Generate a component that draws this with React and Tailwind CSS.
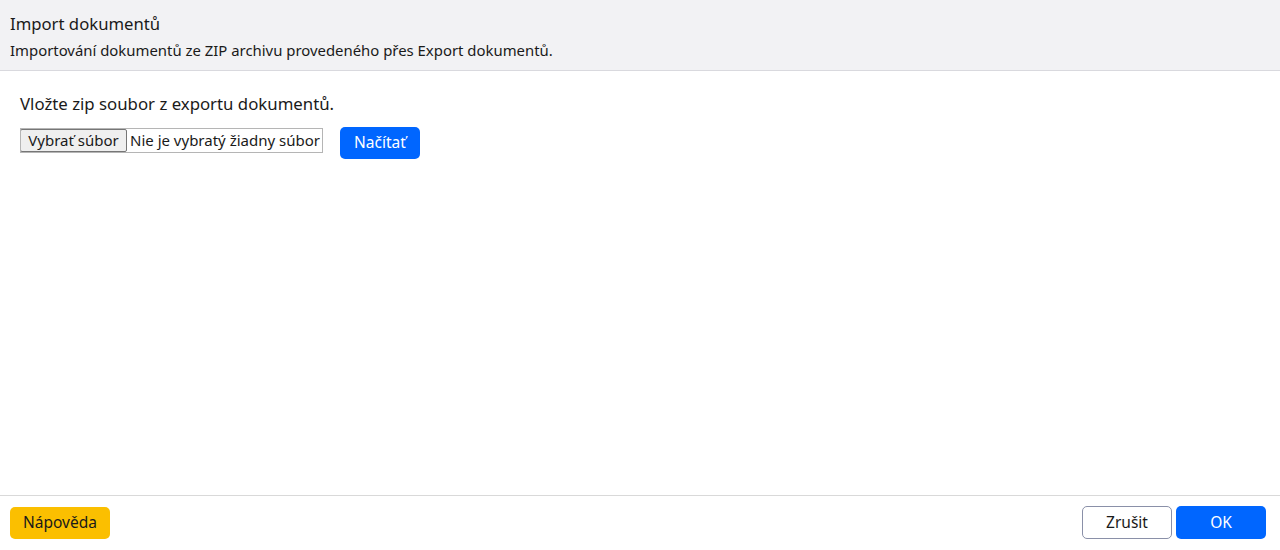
export default function App() {
  return (
    <div
      className="h-[550px] w-[1280px] flex flex-col bg-white text-[#1a1a1a]"
      style={{ fontFamily: '"Noto Sans", "Open Sans", sans-serif' }}
    >
      {/* Header */}
      <div className="h-[71px] shrink-0 bg-[#f2f2f4] border-b border-[#d9d9de] px-[10px] pt-[12px]">
        <div className="text-[16.7px] leading-[24px]">Import dokumentů</div>
        <div className="text-[14.9px] leading-[20px] mt-[4px]">
          Importování dokumentů ze ZIP archivu provedeného přes Export dokumentů.
        </div>
      </div>

      {/* Body */}
      <div className="flex-1 px-[20px] pt-[21px]">
        <p className="text-[16.8px] leading-[24px]">Vložte zip soubor z exportu dokumentů.</p>
        <div className="flex items-start mt-[11px]">
          <div className="flex items-center w-[303px] h-[25px] mt-[1px] border border-[#b5b5b5] text-[15px] overflow-hidden whitespace-nowrap">
            <span className="h-[23px] w-[107px] shrink-0 justify-center flex items-center bg-[#efefef] border border-[#767676] rounded-[2px] -ml-px">
              Vybrať súbor
            </span>
            <span className="pl-[3px]">Nie je vybratý žiadny súbor</span>
          </div>
          <button className="ml-[17px] h-[32px] w-[80px] rounded-[5px] bg-[#0066ff] text-white text-[15.5px]">
            Načítať
          </button>
        </div>
      </div>

      {/* Footer */}
      <div className="h-[55px] shrink-0 border-t border-[#d9d9d9] flex items-center justify-between px-[10px] pb-[1px]">
        <button className="h-[32px] w-[100px] rounded-[5px] bg-[#fbbf00] text-[15.5px]">Nápověda</button>
        <div className="flex gap-[4px] mr-[4px]">
          <button className="h-[33px] w-[90px] rounded-[5px] border border-[#8a90a8] bg-white text-[15.5px]">
            Zrušit
          </button>
          <button className="h-[33px] w-[90px] rounded-[5px] bg-[#0066ff] text-white text-[15.5px]">OK</button>
        </div>
      </div>
    </div>
  );
}
